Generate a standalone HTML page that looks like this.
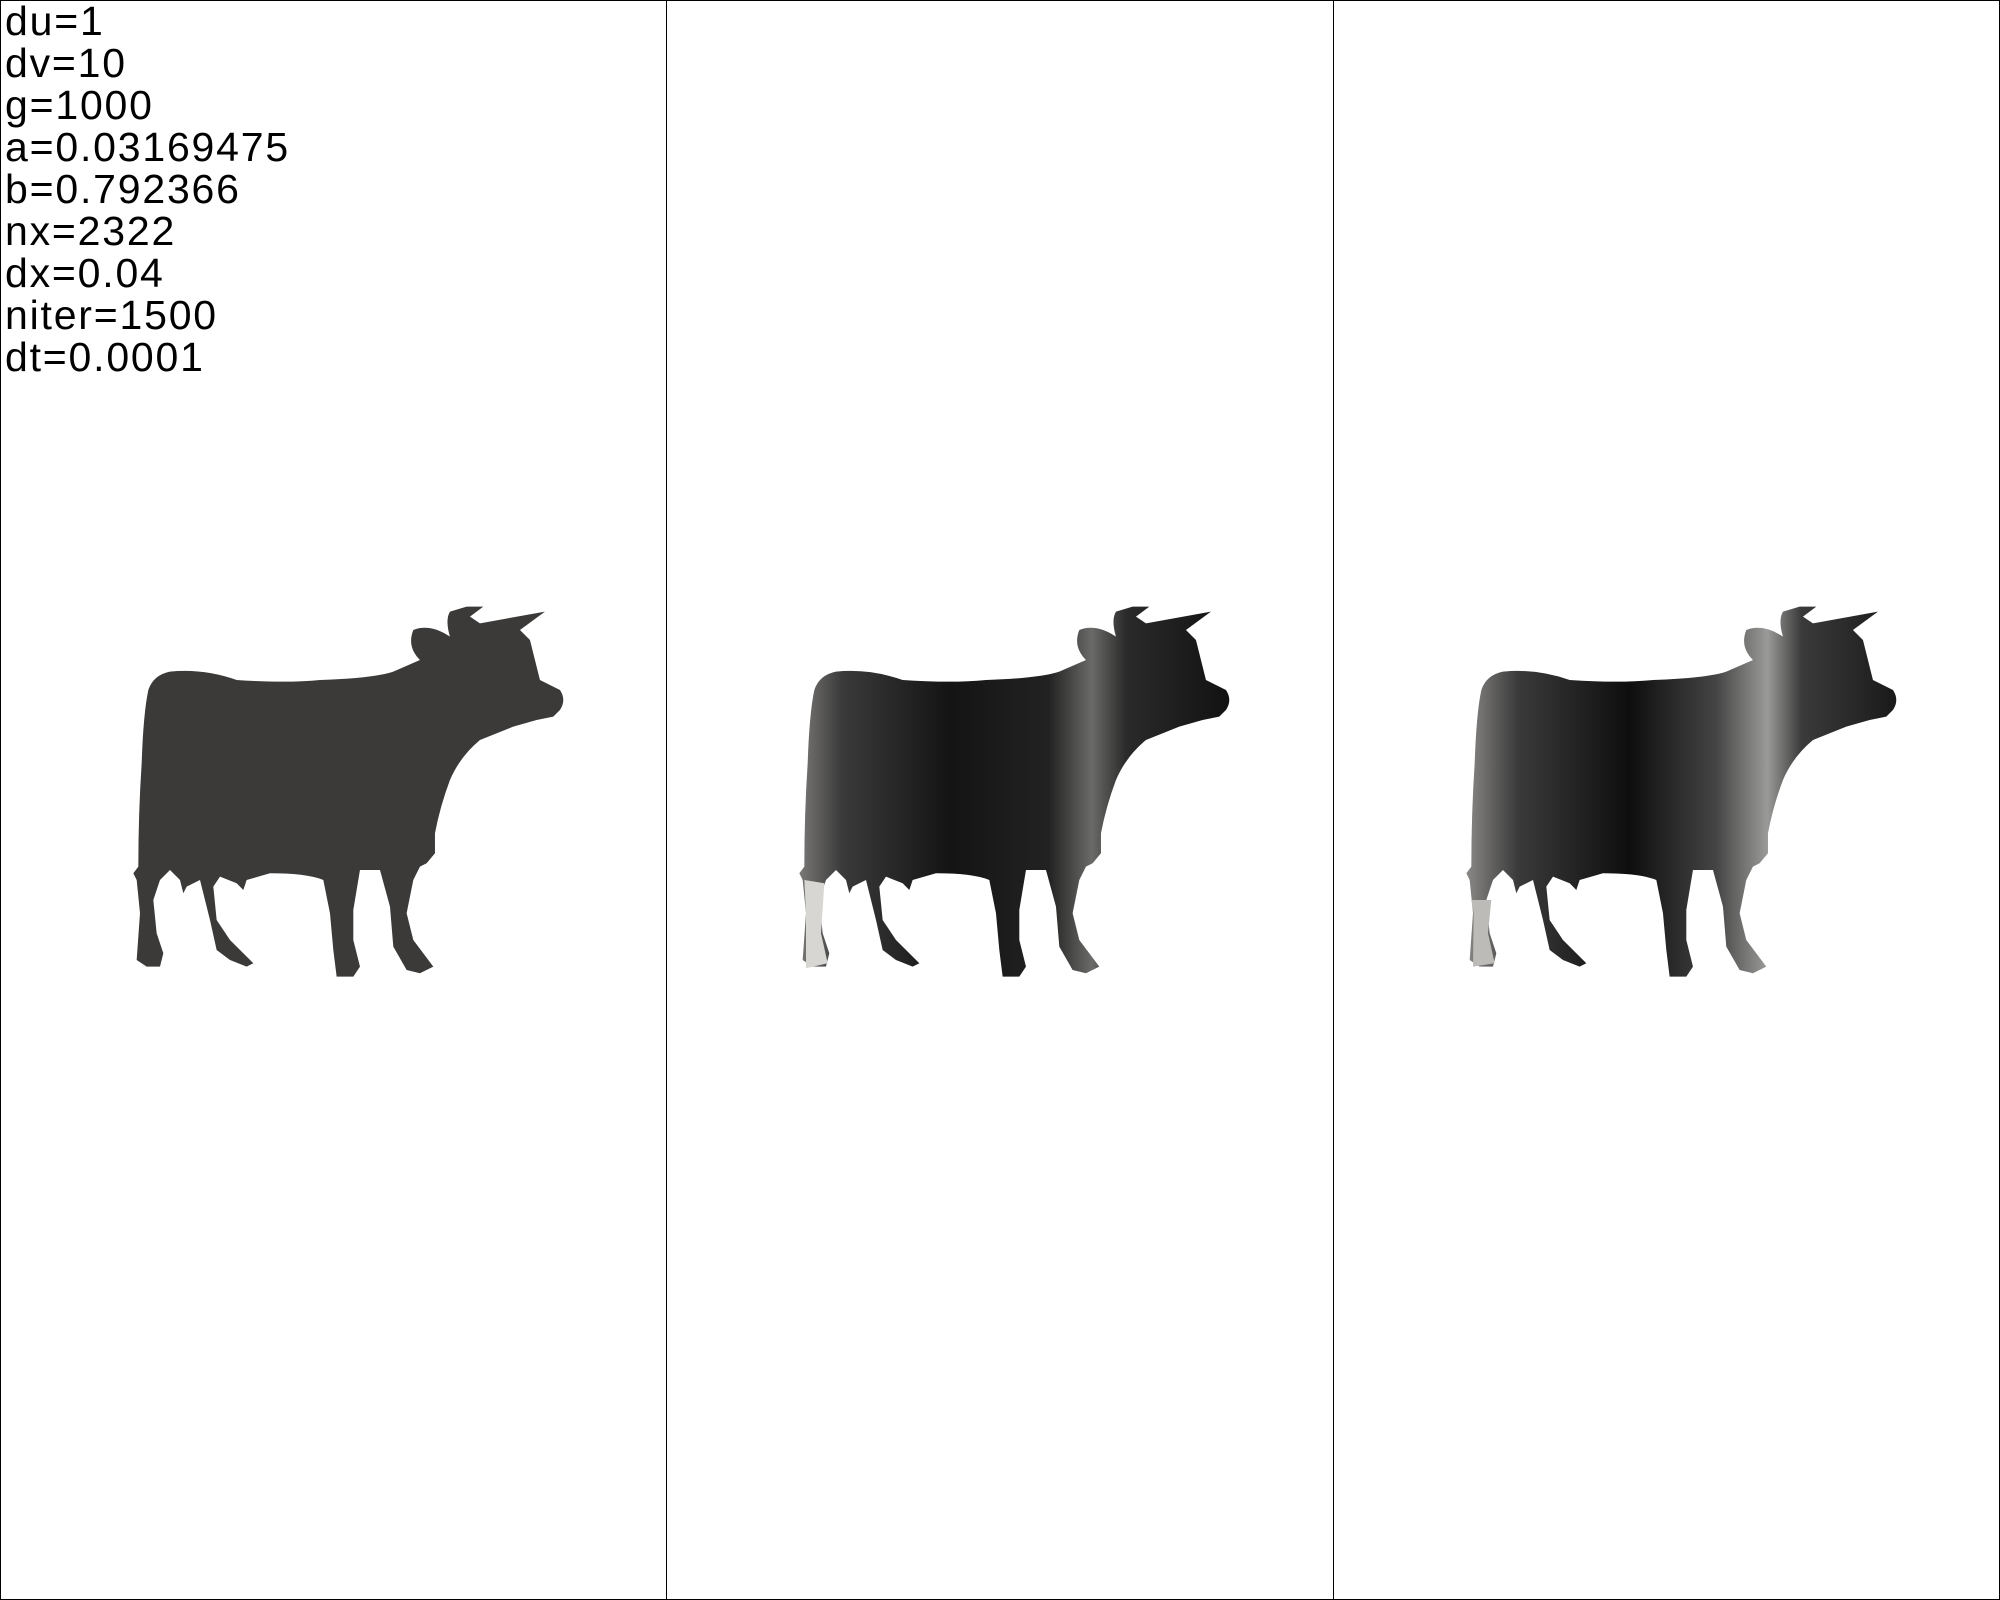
<!DOCTYPE html>
<html><head><meta charset="utf-8"><style>
html,body{margin:0;padding:0;background:#fff;}
body{width:2000px;height:1600px;position:relative;overflow:hidden;}
.frame{position:absolute;left:0;top:0;width:1998px;height:1598px;border:1px solid #000;}
.div{position:absolute;top:0;width:1px;height:1600px;background:#000;}
.txt{position:absolute;left:5px;top:0px;font-family:"Liberation Sans",sans-serif;font-size:41px;line-height:42px;color:#000;letter-spacing:1.8px;}
svg{position:absolute;left:0;top:0;}
</style></head><body>
<div class="frame"></div>
<div class="div" style="left:666px"></div>
<div class="div" style="left:1333px"></div>
<div class="txt">du=1<br>dv=10<br>g=1000<br>a=0.03169475<br>b=0.792366<br>nx=2322<br>dx=0.04<br>niter=1500<br>dt=0.0001</div>
<svg width="2000" height="1600" viewBox="0 0 2000 1600">
<defs>
<path id="cow" d="M150,275 Q250,265 350,300 Q500,310 600,300 Q760,295 820,275 L900,240 Q860,200 880,150 Q930,130 990,170 Q975,120 990,95 L1040,80 L1090,80 L1050,110 L1080,130 L1275,95 L1200,150 L1230,180 L1260,300 L1320,330 Q1340,360 1320,390 L1300,410 L1250,420 L1180,440 L1080,480 Q1020,530 990,600 Q960,680 945,760 L945,820 L920,850 L900,860 L880,900 L860,1000 L880,1080 L940,1160 L900,1180 L860,1170 L820,1100 L810,980 L780,870 L720,870 L700,990 L700,1080 L720,1160 L700,1190 L650,1190 L640,1110 L630,1000 L610,900 Q560,880 450,880 L380,900 L370,930 L350,910 L300,890 L280,920 L290,1020 L330,1080 L400,1150 L380,1160 L330,1140 L290,1110 L270,1020 L240,900 L200,920 L190,940 L180,900 L150,870 L120,900 L100,960 L110,1060 L130,1120 L120,1160 L80,1160 L50,1140 L60,1000 L50,900 L40,880 L55,860 Q55,700 65,550 Q70,400 85,330 Q100,285 150,275 Z"/>
<linearGradient id="g2" x1="0" y1="0" x2="1" y2="0">
<stop offset="0" stop-color="#7a7876"/><stop offset="0.1" stop-color="#3a3a3a"/><stop offset="0.35" stop-color="#141414"/><stop offset="0.58" stop-color="#222"/><stop offset="0.68" stop-color="#6a6a68"/><stop offset="0.76" stop-color="#2a2a2a"/><stop offset="1" stop-color="#121212"/>
</linearGradient>
<linearGradient id="g3" x1="0" y1="0" x2="1" y2="0">
<stop offset="0" stop-color="#8a8886"/><stop offset="0.12" stop-color="#3a3a3a"/><stop offset="0.38" stop-color="#0e0e0e"/><stop offset="0.58" stop-color="#444"/><stop offset="0.7" stop-color="#9a9a98"/><stop offset="0.78" stop-color="#3a3a3a"/><stop offset="1" stop-color="#1a1a1a"/>
</linearGradient>
</defs>
<g transform="translate(120,580) scale(0.3333)"><use href="#cow" fill="#3b3a39"/></g>
<g transform="translate(786,580) scale(0.3333)"><use href="#cow" fill="url(#g2)"/><path d="M55,900 L115,910 L105,1060 L125,1150 L60,1165 L60,1000 Z" fill="#d8d6d2"/></g>
<g transform="translate(1453,580) scale(0.3333)"><use href="#cow" fill="url(#g3)"/><path d="M55,960 L115,960 L105,1060 L125,1150 L60,1160 L62,1000 Z" fill="#bdbbb8"/></g>
</svg>
</body></html>
